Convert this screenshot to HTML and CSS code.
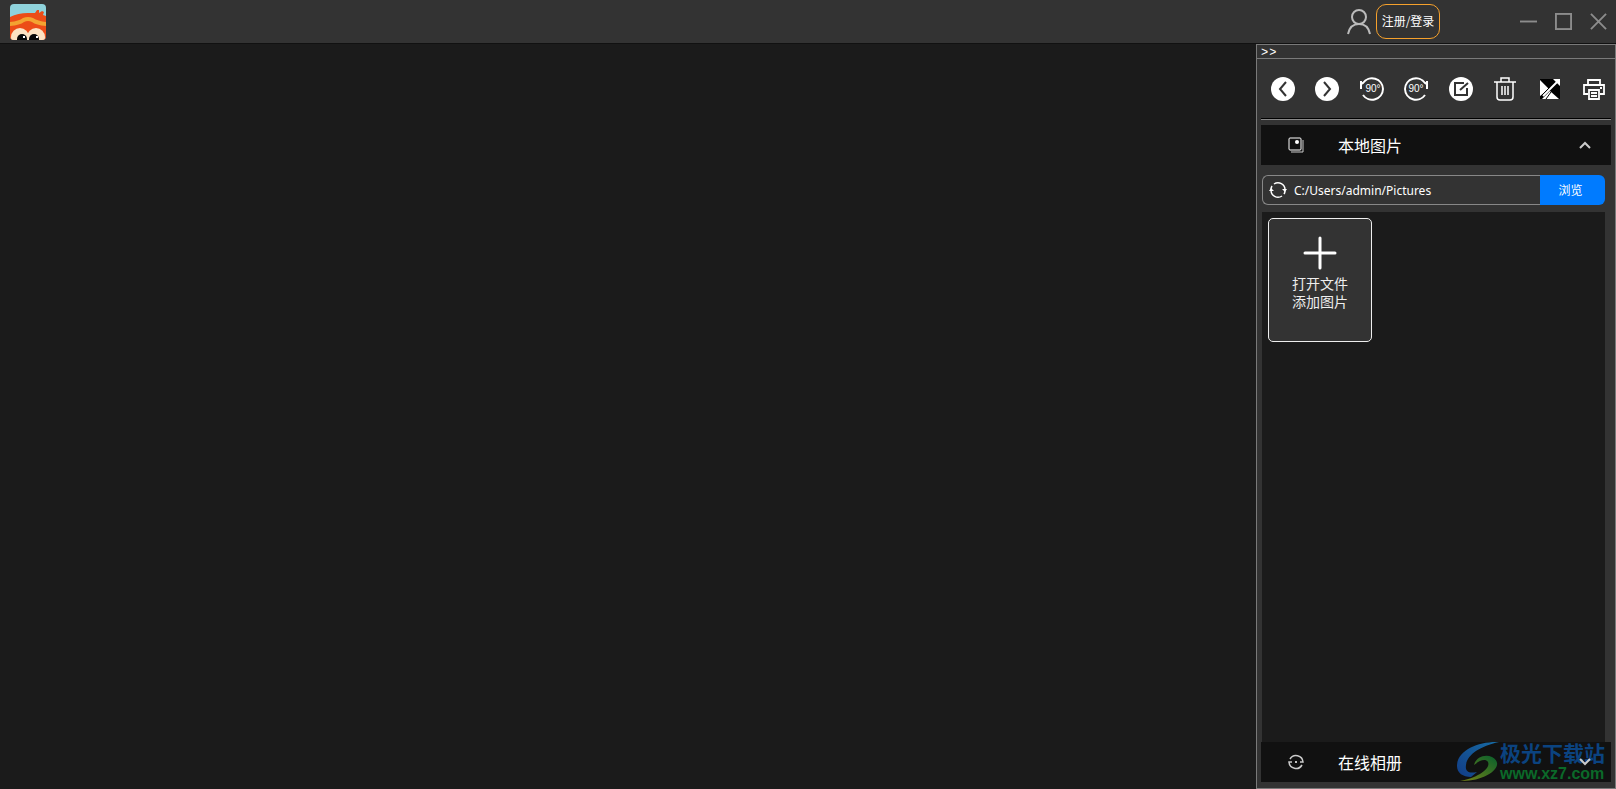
FILE: index.html
```html
<!DOCTYPE html>
<html lang="zh-CN">
<head>
<meta charset="utf-8">
<title>图片查看</title>
<link rel="stylesheet" href="styles.css">
</head>
<body>
<header class="titlebar">
  <svg class="logo" viewBox="0 0 36 36" aria-hidden="true">
    <defs><clipPath id="logo-clip"><rect width="36" height="36" rx="4"/></clipPath></defs>
    <g clip-path="url(#logo-clip)">
      <rect width="36" height="36" fill="#8fd3dc"/>
      <path d="M0 13Q8 9 18 9L25 9L27 6L29 6L29 9L32 7L34 8L33 11L36 12V36H0Z" fill="#ec4c17"/>
      <path d="M0 18Q9 17 13 14Q18 12 23 14Q28 17 36 18V22Q26 21 22 18Q18 16 14 18Q10 21 0 22Z" fill="#f3a331"/>
      <ellipse cx="10" cy="33" rx="9" ry="9" fill="#fde3c3"/><ellipse cx="26" cy="33" rx="9" ry="9" fill="#fde3c3"/>
      <ellipse cx="12" cy="35" rx="5" ry="5" fill="#080808"/><ellipse cx="24" cy="35" rx="5" ry="5" fill="#080808"/>
      <path d="M13 32h2v2h-2zM26 32h2v2h-2z" fill="#fff"/>
    </g>
  </svg>
  <div class="account">
    <svg class="avatar" viewBox="0 0 24 26" aria-hidden="true"><circle cx="12" cy="8" r="7"/><path d="M1 25Q3 15 12 15Q21 15 23 25"/></svg>
    <button class="login" type="button">注册/登录</button>
  </div>
  <div class="window-controls">
    <button type="button" aria-label="最小化"><svg viewBox="0 0 18 18"><path d="M0 9H18"/></svg></button>
    <button type="button" aria-label="最大化"><svg viewBox="0 0 18 18"><rect x="1" y="1" width="16" height="16"/></svg></button>
    <button type="button" aria-label="关闭"><svg viewBox="0 0 18 18"><path d="M1 1L17 17M17 1L1 17"/></svg></button>
  </div>
</header>
<div class="workspace">
  <main class="viewer"></main>
  <aside class="panel">
    <button class="collapse" type="button"><span>&gt;</span><span>&gt;</span></button>
    <div class="toolbar">
      <button type="button" aria-label="上一张"><svg viewBox="0 0 24 24"><circle cx="12" cy="12" r="12" fill="#fff"/><path d="M15 5L9 12L15 19" class="dark"/></svg></button>
      <button type="button" aria-label="下一张"><svg viewBox="0 0 24 24"><circle cx="12" cy="12" r="12" fill="#fff"/><path d="M9 5L15 12L9 19" class="dark"/></svg></button>
      <button type="button" aria-label="向左旋转"><svg viewBox="0 0 24 24"><path d="M1 4V12M1 7L3 6A11 11 0 0 1 23 12A11 11 0 0 1 3 18" class="line"/><text x="13" y="15" class="deg">90°</text></svg></button>
      <button type="button" aria-label="向右旋转"><svg viewBox="0 0 24 24"><path d="M23 4V12M23 7L21 6A11 11 0 0 0 1 12A11 11 0 0 0 21 18" class="line"/><text x="12" y="15" class="deg">90°</text></svg></button>
      <button type="button" aria-label="编辑"><svg viewBox="0 0 24 24"><circle cx="12" cy="12" r="12" fill="#fff"/><path d="M15 6H6V18H18V11M11 13L19 6" class="dark"/></svg></button>
      <button type="button" aria-label="删除"><svg viewBox="0 0 24 24"><path d="M1 5H23M8 5V1H16V5M4 5V20Q4 23 7 23H17Q20 23 20 20V5M9 9V18M12 9V18M15 9V18" class="thin"/></svg></button>
      <button type="button" aria-label="全屏"><svg viewBox="0 0 24 24"><path d="M2 2H22V22H2Z" fill="#000"/><path d="M2 3L11 12L2 19ZM15 2H22V9ZM4 22L12 14L21 22Z" fill="#fff"/><path d="M5 19L20 4" stroke="#fff" stroke-width="2"/><path d="M4 18L12 10M8 22L13 15" stroke="#000" stroke-width="1"/></svg></button>
      <button type="button" aria-label="打印"><svg viewBox="0 0 24 24"><path d="M6 8V3H18V8M6 17H2V8H22V17H18M7 13H17V22H7ZM9 16H15M9 19H15M18 11H20" class="print"/></svg></button>
    </div>
    <button class="section" type="button">
      <svg class="section-icon" viewBox="0 0 16 16"><rect x="1" y="1" width="12" height="12" rx="1" class="hair"/><path d="M15 3V15H3" class="hair dim"/><circle cx="9" cy="5" r="2" fill="#fff"/></svg>
      <span>本地图片</span>
      <svg class="chevron" viewBox="0 0 12 8"><path d="M1 7L6 2L11 7"/></svg>
    </button>
    <div class="path-row">
      <div class="path-box">
        <button class="refresh" type="button" aria-label="刷新"><svg viewBox="0 0 18 18"><path d="M5 3A7 7 0 0 1 16 9M13 15A7 7 0 0 1 2 9M2 9A7 7 0 0 1 3 5M16 9A7 7 0 0 1 15 13" class="thin"/><path d="M13 8H18L16 11ZM0 10H5L2 7Z" fill="#fff"/></svg></button>
        <input type="text" value="C:/Users/admin/Pictures" aria-label="图片路径">
      </div>
      <button class="browse" type="button">浏览</button>
    </div>
    <div class="gallery">
      <button class="add-card" type="button">
        <svg viewBox="0 0 34 34"><path d="M17 2V32M2 17H32"/></svg>
        <span>打开文件</span><span>添加图片</span>
      </button>
    </div>
    <div class="footer">
      <button class="section" type="button">
        <svg class="section-icon" viewBox="0 0 16 16"><path d="M2 5A7 7 0 0 1 15 8H12M14 11A7 7 0 0 1 1 8H4" class="thin dim"/><circle cx="8" cy="8" r="1" fill="#fff"/></svg>
        <span>在线相册</span>
        <svg class="chevron" viewBox="0 0 12 8"><path d="M1 1L6 6L11 1"/></svg>
      </button>
      <div class="watermark">
        <svg viewBox="0 0 42 42">
          <defs>
            <linearGradient id="wave-blue" x1="0" y1="1" x2="1" y2="0"><stop offset="0" stop-color="#123c85"/><stop offset="1" stop-color="#176da6"/></linearGradient>
            <linearGradient id="wave-green" x1="0" y1="1" x2="1" y2="0"><stop offset="0" stop-color="#788217"/><stop offset="1" stop-color="#08602c"/></linearGradient>
          </defs>
          <path d="M42 1C22 0 0 9 0 25C0 32 6 36 14 36L20 31C11 33 8 30 9 24C10 14 23 5 42 1Z" fill="url(#wave-blue)"/>
          <path d="M17 24C19 16 28 13 35 16C50 24 30 41 3 40C20 37 34 28 31 21C28 17 22 20 17 24Z" fill="url(#wave-green)"/>
        </svg>
        <div><strong>极光下载站</strong><span>www.xz7.com</span></div>
      </div>
    </div>
  </aside>
</div>
</body>
</html>
```
FILE: styles.css
```css
* { box-sizing: border-box; }
body {
  margin: 0;
  height: 100vh;
  display: flex;
  flex-direction: column;
  background: #1b1b1b;
  color: #fff;
  font-family: "Noto Sans", "Noto Sans CJK SC", sans-serif;
}
button {
  margin: 0;
  padding: 0;
  border: 0;
  background: none;
  color: inherit;
  font: inherit;
}
svg { display: block; fill: none; }
.titlebar {
  flex: none;
  display: flex;
  align-items: center;
  height: 43px;
  padding: 0 9px 0 10px;
  background: #333;
}
.logo { width: 36px; height: 36px; }
.account {
  display: flex;
  align-items: center;
  gap: 5px;
  margin-left: auto;
}
.avatar { width: 24px; height: 26px; stroke: #bbb; stroke-width: 2; }
.login {
  width: 64px;
  height: 35px;
  padding-bottom: 2px;
  border: 1px solid #f6a12c;
  border-radius: 10px;
  font: 12px/18px "Noto Sans CJK SC", sans-serif;
}
.window-controls { display: flex; gap: 18px; margin-left: 80px; }
.window-controls svg { width: 17px; height: 17px; stroke: #8c8c8c; stroke-width: 2; }
.workspace { flex: 1; display: flex; min-height: 0; border-top: 1px solid #111; }
.viewer { flex: 1; }
.panel {
  display: flex;
  flex-direction: column;
  width: 360px;
  padding: 0 4px 6px;
  border: 1px solid #7a7a7a;
  background: #333;
}
.collapse {
  flex: none;
  display: flex;
  gap: 1px;
  height: 14px;
  margin: 0 -4px;
  padding: 2px 0 0 4px;
  border-bottom: 1px solid #7a7a7a;
  font: 12px/12px "Liberation Mono", monospace;
}
.toolbar {
  flex: none;
  display: flex;
  justify-content: space-between;
  align-items: center;
  height: 61px;
  margin-bottom: 5px;
  padding: 0 5px 1px 10px;
  border-bottom: 1px solid #888;
  box-shadow: inset 0 -1px #000;
}
.toolbar svg { width: 24px; height: 24px; }
.line { stroke: #fff; stroke-width: 2; }
.print { stroke: #fff; stroke-width: 1.8; }
.thin { stroke: #fff; stroke-width: 1.5; }
.hair { stroke: #fff; stroke-width: 1; }
.dim { stroke: #ccc; }
.dark { stroke: #333; stroke-width: 2; }
.deg {
  fill: #fff;
  font: 10px "Liberation Sans", sans-serif;
  text-anchor: middle;
}
.section {
  flex: none;
  display: flex;
  align-items: center;
  width: 100%;
  height: 40px;
  padding: 0 20px 0 27px;
  background: #111;
  font: 16px/24px "Noto Sans CJK SC", sans-serif;
}
.section-icon { width: 16px; height: 16px; margin-right: 34px; }
.chevron { width: 12px; height: 8px; margin-left: auto; stroke: #ccc; stroke-width: 2; }
.path-row { flex: none; display: flex; height: 30px; margin: 10px 6px 7px 1px; }
.path-box {
  flex: 1;
  display: flex;
  align-items: center;
  gap: 7px;
  min-width: 0;
  padding-left: 6px;
  border: 1px solid #888;
  border-right: 0;
  border-radius: 6px 0 0 6px;
}
.refresh svg { width: 18px; height: 18px; }
.path-box input {
  flex: 1;
  min-width: 0;
  padding: 2px 0 0;
  border: 0;
  outline: 0;
  background: none;
  color: #fff;
  font: 12px/20px "Noto Sans", sans-serif;
}
.browse {
  width: 65px;
  padding-right: 4px;
  border-radius: 0 6px 6px 0;
  background: #007bff;
  font: 12px/18px "Noto Sans CJK SC", sans-serif;
}
.gallery { flex: 1; min-height: 0; margin: 0 6px 0 1px; padding: 6px; background: #1b1b1b; }
.add-card {
  display: flex;
  flex-direction: column;
  align-items: center;
  width: 104px;
  height: 124px;
  padding-top: 17px;
  border: 1px solid #eee;
  border-radius: 5px;
  background: #333;
  color: #eee;
  font: 14px/18px "Noto Sans CJK SC", sans-serif;
}
.add-card svg { width: 34px; height: 34px; margin-bottom: 4px; stroke: #fff; stroke-width: 3; stroke-linecap: round; }
.footer { flex: none; position: relative; }
.footer .chevron { position: relative; z-index: 1; }
.watermark {
  position: absolute;
  right: 6px;
  bottom: -2px;
  display: flex;
  align-items: center;
  gap: 1px;
  pointer-events: none;
}
.watermark svg { width: 42px; height: 42px; }
.watermark div { display: flex; flex-direction: column; }
.watermark strong { color: #0b4380; font: bold 21px/24px "Noto Sans CJK SC", sans-serif; }
.watermark span { color: #0b6929; font: bold 16px/20px "Liberation Sans", sans-serif; }
```
